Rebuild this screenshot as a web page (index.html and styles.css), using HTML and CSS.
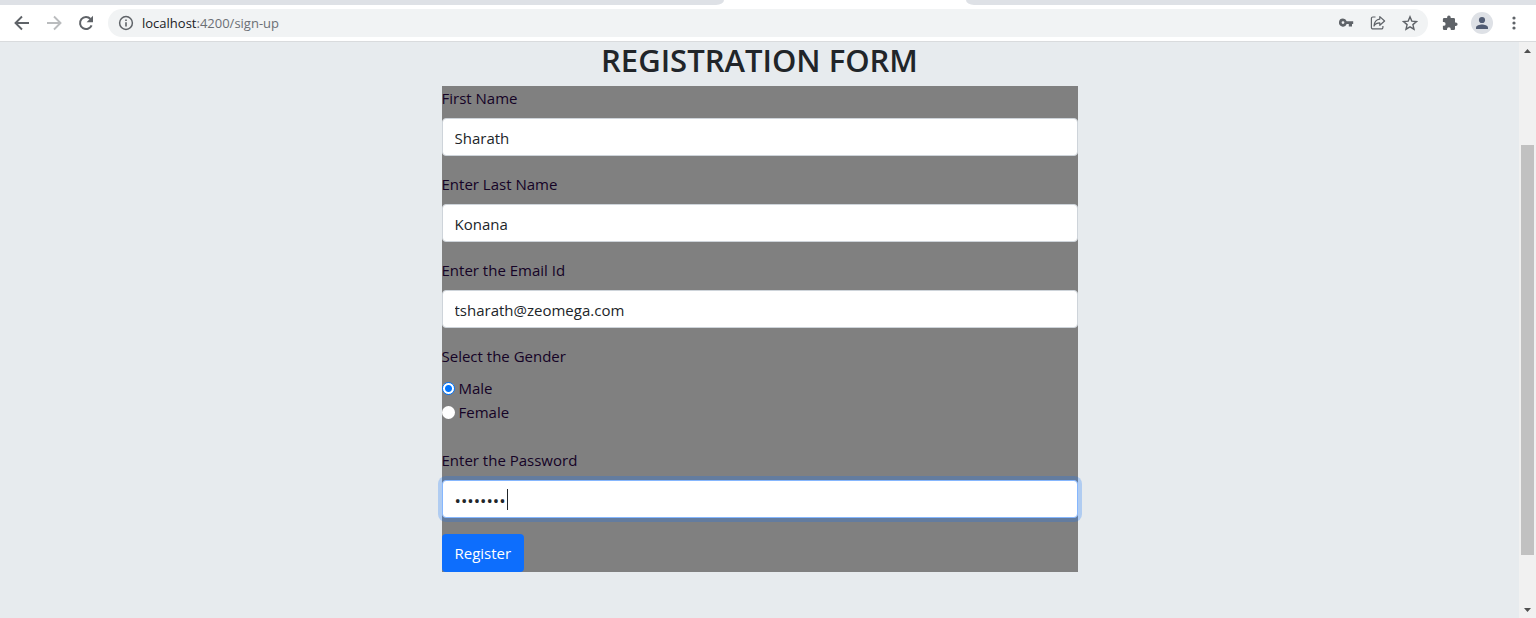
FILE: index.html
```html
<!DOCTYPE html>
<html lang="en">
<head>
<meta charset="utf-8">
<title>Registration Form</title>
<link rel="stylesheet" href="styles.css">
</head>
<body>
<div class="tabs"><div class="tabs-left"></div><div class="tab-active"></div><div class="tabs-right"></div></div>
<header class="toolbar">
  <button class="tool" type="button" aria-label="Back"><svg viewBox="0 0 16 16"><path d="M15 8H2M8 1.5L1.500 8L8 14.500" fill="none" stroke="currentColor" stroke-width="1.9"/></svg></button>
  <button class="tool tool-off" type="button" aria-label="Forward"><svg viewBox="0 0 16 16"><path d="M1 8H14M8 1.5L14.500 8L8 14.500" fill="none" stroke="currentColor" stroke-width="1.900"/></svg></button>
  <button class="tool" type="button" aria-label="Reload"><svg viewBox="0 0 16 16"><path d="M13.600 10.300A6 6 0 1 1 12.500 4" fill="none" stroke="currentColor" stroke-width="2"/><path d="M15 .8V7.200H8.600Z" fill="currentColor"/></svg></button>
  <div class="address">
    <svg class="info" viewBox="0 0 16 16"><circle cx="8" cy="8" r="6.400" fill="none" stroke="currentColor" stroke-width="1.500"/><path d="M7.200 7.200H8.800V11.500H7.200ZM7.200 4.500H8.800V6H7.200Z" fill="currentColor"/></svg>
    <span class="url"><span class="host">localhost</span>:4200/sign-up</span>
    <button class="tool" type="button" aria-label="Passwords"><svg viewBox="0 0 16 16"><path d="M5 3.600A4 4 0 1 0 8.700 9H10.800V11.500H14V9H15.200V6.200H8.700A4 4 0 0 0 5 3.600ZM5 6.200A1.400 1.400 0 1 1 5 9A1.400 1.400 0 1 1 5 6.200Z" fill="currentColor" fill-rule="evenodd"/></svg></button>
    <button class="tool" type="button" aria-label="Share"><svg viewBox="0 0 16 16" fill="none" stroke="currentColor" stroke-width="1.200" stroke-linejoin="round"><path d="M5.500 2H2.800A1.400 1.400 0 0 0 1.400 3.400V12.500A1.400 1.400 0 0 0 2.800 13.900H11.500A1.400 1.400 0 0 0 12.900 12.500V11"/><path d="M9.800 1.600L14.600 6L9.800 10.300V7.900C7 7.900 5.200 8.900 4 11C4.300 7.200 6.300 4.500 9.800 4.100Z"/></svg></button>
    <button class="tool" type="button" aria-label="Bookmark"><svg viewBox="0 0 16 16"><path d="M8 1.800L9.800 6.100L14.500 6.500L10.900 9.600L12 14.200L8 11.800L4 14.200L5.100 9.600L1.500 6.500L6.200 6.100Z" fill="none" stroke="currentColor" stroke-width="1.400"/></svg></button>
  </div>
  <button class="tool" type="button" aria-label="Extensions"><svg viewBox="0 0 16 16"><path d="M13.800 7.400H13V4.300A1.300 1.300 0 0 0 11.700 3H8.700V2.400A1.800 1.800 0 0 0 5.100 2.400V3H2.200A1.300 1.300 0 0 0 .9 4.300V7H1.700A1.900 1.900 0 0 1 1.700 10.800H.9V13.700A1.300 1.300 0 0 0 2.200 15H5V14.200A1.900 1.900 0 0 1 8.800 14.200V15H11.700A1.300 1.300 0 0 0 13 13.700V11H13.800A1.800 1.800 0 0 0 13.800 7.400Z" fill="currentColor"/></svg></button>
  <button class="profile" type="button" aria-label="Profile"><svg viewBox="0 0 16 16"><circle cx="8" cy="5" r="3.100" fill="currentColor"/><path d="M2 14V12.400C2 10.300 5.600 9.400 8 9.400S14 10.300 14 12.400V14Z" fill="currentColor"/></svg></button>
  <button class="tool" type="button" aria-label="Menu"><svg viewBox="0 0 16 16" fill="currentColor"><circle cx="8" cy="3" r="1.600"/><circle cx="8" cy="8" r="1.600"/><circle cx="8" cy="13" r="1.600"/></svg></button>
</header>
<div class="viewport">
  <main class="page">
    <h1 class="title">REGISTRATION FORM</h1>
    <form class="form">
      <div class="field"><label class="label" for="first">First Name</label><input class="control" id="first" type="text" value="Sharath"></div>
      <div class="field"><label class="label" for="last">Enter Last Name</label><input class="control" id="last" type="text" value="Konana"></div>
      <div class="field"><label class="label" for="email">Enter the Email Id</label><input class="control" id="email" type="email" value="tsharath@zeomega.com"></div>
      <fieldset class="gender">
        <legend class="label">Select the Gender</legend>
        <label class="choice"><input class="radio" type="radio" name="gender" checked>Male</label>
        <label class="choice"><input class="radio" type="radio" name="gender">Female</label>
      </fieldset>
      <div class="field"><label class="label" for="password">Enter the Password</label>
        <div class="secret"><input class="control control-focus" id="password" type="password" value="password"><span class="caret"></span></div>
      </div>
      <button class="submit" type="submit">Register</button>
    </form>
  </main>
  <div class="scrollbar">
    <svg class="arrow" viewBox="0 0 17 17"><path d="M5 11H12L8.500 7Z" fill="currentColor"/></svg>
    <div class="space-before"></div><div class="thumb"></div><div class="space-after"></div>
    <svg class="arrow" viewBox="0 0 17 17"><path d="M5 7H12L8.500 11Z" fill="currentColor"/></svg>
  </div>
</div>
</body>
</html>
```
FILE: styles.css
```css
* { box-sizing: border-box; }
body {
  display: flex;
  flex-direction: column;
  min-height: 100vh;
  margin: 0;
  font-family: "Segoe UI", "Open Sans", "Noto Sans", sans-serif;
  font-size: 15px;
  line-height: 24px;
  color: #212529;
  background: #e7ebee;
}
button, input { font: inherit; }
button { border: 0; padding: 0; }
svg { display: block; }
.tabs { display: flex; height: 5px; background: #fff; }
.tabs-left { flex: 724; background: #dee1e6; border-bottom-right-radius: 8px 5px; }
.tab-active { flex: 242; }
.tabs-right { flex: 570; background: #dee1e6; border-bottom-left-radius: 8px 5px; }
.toolbar {
  display: flex;
  align-items: center;
  gap: 16px;
  height: 37px;
  padding: 0 14px;
  background: #fff;
  border-bottom: 1px solid #d9dbdd;
}
.tool { flex: none; width: 16px; background: none; color: #5f6368; }
.tool-off { color: #babcbe; }
.address {
  display: flex;
  flex: 1;
  align-items: center;
  gap: 16px;
  height: 28px;
  margin: 0 -2px;
  padding: 0 10px;
  border-radius: 14px;
  background: #f1f3f4;
}
.info { width: 16px; margin-right: -8px; color: #5f6368; }
.url { flex: 1; font-size: 13px; color: #6b6f74; }
.host { color: #202124; }
.profile {
  display: grid;
  place-items: center;
  width: 22px;
  height: 22px;
  margin: 0 -3px;
  border-radius: 50%;
  background: #dee1e6;
  color: #525d74;
}
.profile svg { width: 16px; }
.viewport { display: flex; flex: 1; }
.page { flex: 1; }
.title { margin: 0 0 8px; font-size: 31px; line-height: 36px; font-weight: 600; text-align: center; }
.form { width: 636px; max-width: 100%; margin: 0 auto; background: #808080; }
.field { margin-bottom: 16px; }
.label { display: block; padding: 0; margin-bottom: 8px; color: #150326; }
.control {
  display: block;
  width: 100%;
  height: 38px;
  padding: 7px 12px 5px;
  border: 1px solid #ced4da;
  border-radius: 4px;
  background: #fff;
  color: #212529;
  outline: 0;
}
.gender { margin: 0 0 24px; padding: 0; border: 0; }
.choice { display: flex; align-items: center; gap: 4px; color: #150326; }
.radio {
  appearance: none;
  width: 13px;
  height: 13px;
  margin: 0;
  border-radius: 50%;
  background: #fff;
}
.radio:checked { border: 1px solid #0075ff; background: radial-gradient(circle, #0075ff 3px, #fff 4px); }
.secret { position: relative; }
.control-focus { font-size: 17px; border-color: #86b7fe; box-shadow: 0 0 0 4px rgba(13, 110, 253, .25); }
.caret { position: absolute; top: 9px; left: 65px; width: 1px; height: 21px; background: #212529; }
.submit { display: block; height: 38px; padding: 0 13px; border-radius: 4px; background: #0d6efd; color: #fff; }
.scrollbar { display: flex; flex-direction: column; width: 17px; background: #f1f1f1; color: #505050; }
.arrow { width: 17px; height: 17px; }
.space-before { flex: 86; }
.thumb { flex: 410; margin: 0 2px; background: #c1c1c1; }
.space-after { flex: 46; }
```
